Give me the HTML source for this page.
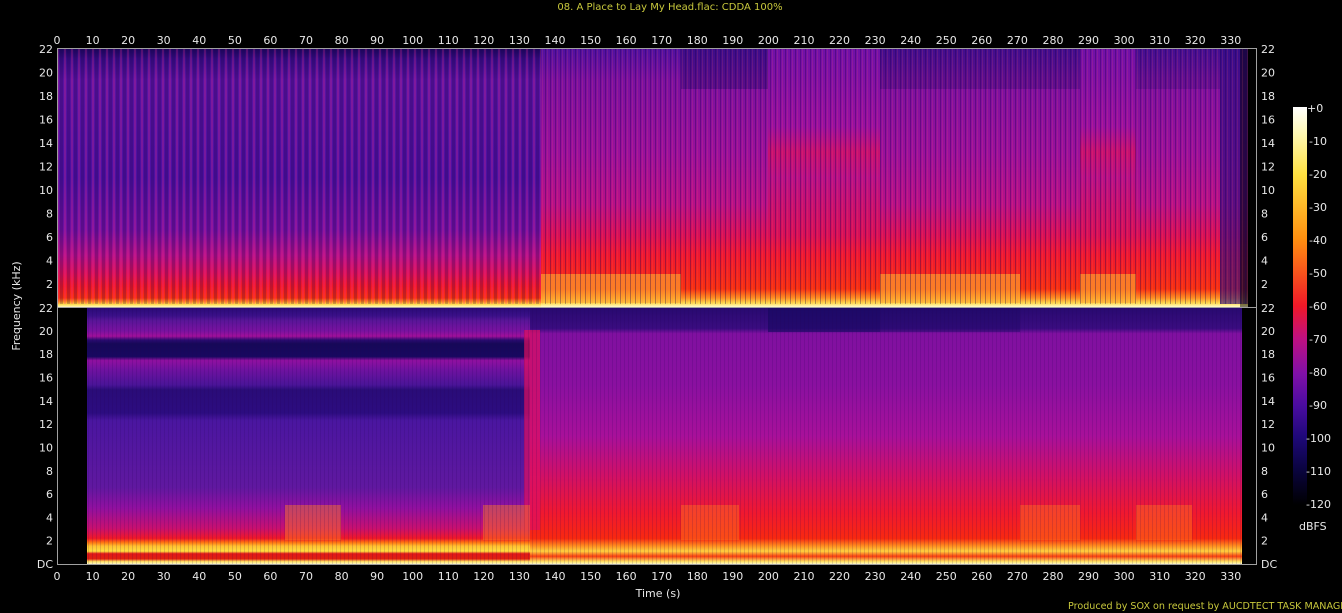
<!DOCTYPE html>
<html><head><meta charset="utf-8"><style>
html,body{margin:0;padding:0;background:#000;width:1342px;height:613px;overflow:hidden}
svg{display:block}
text{font-family:"DejaVu Sans","Liberation Sans",sans-serif;font-size:11px;fill:#e8e8e8}
</style></head><body>
<svg width="1342" height="613" viewBox="0 0 1342 613" xmlns="http://www.w3.org/2000/svg">
<defs>
<linearGradient id="tl" x1="0" y1="49" x2="0" y2="307" gradientUnits="userSpaceOnUse">
<stop offset="0" stop-color="#1e0660"/><stop offset="0.04" stop-color="#3a0c88"/>
<stop offset="0.12" stop-color="#5a12a0"/><stop offset="0.5" stop-color="#4c10a0"/>
<stop offset="0.7" stop-color="#7010a0"/><stop offset="0.8" stop-color="#b01088"/>
<stop offset="0.87" stop-color="#d81058"/><stop offset="0.92" stop-color="#f01828"/>
<stop offset="0.965" stop-color="#f83010"/><stop offset="0.98" stop-color="#ff9020"/>
<stop offset="0.99" stop-color="#ffe050"/><stop offset="1" stop-color="#fff8c0"/>
</linearGradient>
<linearGradient id="tr" x1="0" y1="49" x2="0" y2="307" gradientUnits="userSpaceOnUse">
<stop offset="0" stop-color="#5010a0"/><stop offset="0.12" stop-color="#7a10a0"/>
<stop offset="0.4" stop-color="#9a109c"/><stop offset="0.6" stop-color="#b81088"/>
<stop offset="0.72" stop-color="#d81058"/><stop offset="0.8" stop-color="#f01830"/>
<stop offset="0.93" stop-color="#f83010"/><stop offset="0.965" stop-color="#ff9020"/>
<stop offset="0.985" stop-color="#ffe050"/><stop offset="1" stop-color="#fffad0"/>
</linearGradient>
<linearGradient id="tm" x1="0" y1="49" x2="0" y2="307" gradientUnits="userSpaceOnUse">
<stop offset="0" stop-color="#7010a8"/><stop offset="0.3" stop-color="#9a10a0"/>
<stop offset="0.4" stop-color="#c81070"/><stop offset="0.5" stop-color="#b81088"/>
<stop offset="0.72" stop-color="#d81058"/><stop offset="0.8" stop-color="#f01830"/>
<stop offset="0.93" stop-color="#f83010"/><stop offset="0.965" stop-color="#ff9020"/>
<stop offset="0.985" stop-color="#ffe050"/><stop offset="1" stop-color="#fffad0"/>
</linearGradient>
<linearGradient id="bl" x1="0" y1="308" x2="0" y2="564" gradientUnits="userSpaceOnUse">
<stop offset="0" stop-color="#2a0a78"/><stop offset="0.03" stop-color="#3a1088"/>
<stop offset="0.05" stop-color="#5a1598"/><stop offset="0.09" stop-color="#7a12a0"/>
<stop offset="0.11" stop-color="#a0109a"/><stop offset="0.125" stop-color="#2a0a70"/>
<stop offset="0.14" stop-color="#160858"/><stop offset="0.19" stop-color="#180860"/>
<stop offset="0.205" stop-color="#9010a0"/><stop offset="0.24" stop-color="#7012a0"/>
<stop offset="0.3" stop-color="#4a1498"/><stop offset="0.32" stop-color="#2a0c78"/>
<stop offset="0.41" stop-color="#2c0c80"/><stop offset="0.44" stop-color="#4a16a0"/>
<stop offset="0.7" stop-color="#6018a0"/><stop offset="0.78" stop-color="#9010a0"/>
<stop offset="0.86" stop-color="#c81070"/><stop offset="0.9" stop-color="#f01828"/>
<stop offset="0.915" stop-color="#ff7010"/><stop offset="0.93" stop-color="#ffc030"/>
<stop offset="0.95" stop-color="#ffe040"/><stop offset="0.96" stop-color="#e01818"/>
<stop offset="0.98" stop-color="#e02010"/><stop offset="0.99" stop-color="#ffe060"/>
<stop offset="1" stop-color="#fff8c0"/>
</linearGradient>
<linearGradient id="br" x1="0" y1="308" x2="0" y2="564" gradientUnits="userSpaceOnUse">
<stop offset="0" stop-color="#280a70"/><stop offset="0.08" stop-color="#3a0c80"/>
<stop offset="0.1" stop-color="#8010a0"/><stop offset="0.3" stop-color="#8a10a0"/>
<stop offset="0.5" stop-color="#a8109a"/><stop offset="0.65" stop-color="#d01068"/>
<stop offset="0.8" stop-color="#f01830"/><stop offset="0.9" stop-color="#f82810"/>
<stop offset="0.93" stop-color="#ff9020"/><stop offset="0.95" stop-color="#ffd040"/>
<stop offset="0.97" stop-color="#f84010"/><stop offset="0.99" stop-color="#ffe060"/>
<stop offset="1" stop-color="#fff8c0"/>
</linearGradient>
<linearGradient id="cb" x1="0" y1="107" x2="0" y2="505" gradientUnits="userSpaceOnUse">
<stop offset="0" stop-color="#ffffff"/><stop offset="0.07" stop-color="#fff8b0"/>
<stop offset="0.17" stop-color="#ffe040"/><stop offset="0.33" stop-color="#ff9010"/>
<stop offset="0.5" stop-color="#f01828"/><stop offset="0.58" stop-color="#c01080"/>
<stop offset="0.67" stop-color="#8010a8"/><stop offset="0.75" stop-color="#4a0ca0"/>
<stop offset="0.83" stop-color="#1e0878"/><stop offset="0.91" stop-color="#0a0440"/>
<stop offset="1" stop-color="#000"/>
</linearGradient>
<pattern id="s1" x="57" y="0" width="7" height="10" patternUnits="userSpaceOnUse">
<rect x="0" y="0" width="2" height="10" fill="#ff3090" opacity="0.22"/>
<rect x="3" y="0" width="3" height="10" fill="#100040" opacity="0.22"/>
</pattern>
<pattern id="s2" x="0" y="0" width="5" height="10" patternUnits="userSpaceOnUse">
<rect x="0" y="0" width="1" height="10" fill="#200050" opacity="0.35"/>
<rect x="2" y="0" width="1" height="10" fill="#ff6060" opacity="0.15"/>
</pattern>
<pattern id="s3" x="0" y="0" width="4" height="6" patternUnits="userSpaceOnUse">
<rect x="0" y="0" width="1" height="6" fill="#200050" opacity="0.15"/>
</pattern>
</defs>

<text x="670" y="10" text-anchor="middle" style="font-size:10px;fill:#c8c83c">08. A Place to Lay My Head.flac: CDDA 100%</text>

<rect x="57" y="49" width="484" height="258" fill="url(#tl)"/>
<rect x="541" y="49" width="707" height="258" fill="url(#tr)"/>
<rect x="768" y="49" width="112" height="258" fill="url(#tm)"/>
<rect x="1080" y="49" width="56" height="258" fill="url(#tm)"/>
<rect x="681" y="49" width="87" height="40" fill="#200868" opacity="0.4"/>
<rect x="880" y="49" width="200" height="40" fill="#200868" opacity="0.3"/>
<rect x="1136" y="49" width="84" height="40" fill="#200868" opacity="0.25"/>
<rect x="541" y="274" width="140" height="29" fill="#ffb030" opacity="0.6"/>
<rect x="880" y="274" width="140" height="29" fill="#ffb030" opacity="0.6"/>
<rect x="1080" y="274" width="56" height="29" fill="#ffb030" opacity="0.6"/>
<rect x="1220" y="49" width="28" height="255" fill="#2a0a80" opacity="0.65"/>
<rect x="1240" y="49" width="8" height="258" fill="#000" opacity="0.5"/>
<rect x="57" y="49" width="484" height="255" fill="url(#s1)"/>
<rect x="541" y="49" width="707" height="255" fill="url(#s2)"/>

<rect x="57" y="308" width="30" height="256" fill="#000"/>
<rect x="87" y="308" width="443" height="256" fill="url(#bl)"/>
<rect x="530" y="308" width="712" height="256" fill="url(#br)"/>
<rect x="524" y="330" width="16" height="200" fill="#e01060" opacity="0.7"/>
<rect x="768" y="308" width="112" height="24" fill="#160860" opacity="0.6"/>
<rect x="880" y="308" width="140" height="24" fill="#160860" opacity="0.35"/>
<rect x="285" y="505" width="56" height="35" fill="#ff8020" opacity="0.45"/>
<rect x="483" y="505" width="47" height="35" fill="#ff8020" opacity="0.45"/>
<rect x="681" y="505" width="58" height="35" fill="#ff8020" opacity="0.4"/>
<rect x="1020" y="505" width="60" height="35" fill="#ff8020" opacity="0.4"/>
<rect x="1136" y="505" width="56" height="35" fill="#ff8020" opacity="0.4"/>
<rect x="87" y="308" width="1155" height="256" fill="url(#s3)"/>

<g stroke="#a0a0a0" stroke-width="1" fill="none">
<rect x="57.5" y="48.5" width="1199" height="516"/>
<line x1="57" y1="307.5" x2="1257" y2="307.5"/>
</g>

<g text-anchor="middle">
<text x="57" y="44">0</text><text x="92.6" y="44">10</text><text x="128.1" y="44">20</text><text x="163.7" y="44">30</text><text x="199.3" y="44">40</text><text x="234.9" y="44">50</text><text x="270.4" y="44">60</text><text x="306" y="44">70</text><text x="341.6" y="44">80</text><text x="377.1" y="44">90</text><text x="412.7" y="44">100</text><text x="448.3" y="44">110</text><text x="483.8" y="44">120</text><text x="519.4" y="44">130</text><text x="555" y="44">140</text><text x="590.6" y="44">150</text><text x="626.1" y="44">160</text><text x="661.7" y="44">170</text><text x="697.3" y="44">180</text><text x="732.8" y="44">190</text><text x="768.4" y="44">200</text><text x="804" y="44">210</text><text x="839.5" y="44">220</text><text x="875.1" y="44">230</text><text x="910.7" y="44">240</text><text x="946.3" y="44">250</text><text x="981.8" y="44">260</text><text x="1017.4" y="44">270</text><text x="1053" y="44">280</text><text x="1088.5" y="44">290</text><text x="1124.1" y="44">300</text><text x="1159.7" y="44">310</text><text x="1195.2" y="44">320</text><text x="1230.8" y="44">330</text>
<text x="57" y="580">0</text><text x="92.6" y="580">10</text><text x="128.1" y="580">20</text><text x="163.7" y="580">30</text><text x="199.3" y="580">40</text><text x="234.9" y="580">50</text><text x="270.4" y="580">60</text><text x="306" y="580">70</text><text x="341.6" y="580">80</text><text x="377.1" y="580">90</text><text x="412.7" y="580">100</text><text x="448.3" y="580">110</text><text x="483.8" y="580">120</text><text x="519.4" y="580">130</text><text x="555" y="580">140</text><text x="590.6" y="580">150</text><text x="626.1" y="580">160</text><text x="661.7" y="580">170</text><text x="697.3" y="580">180</text><text x="732.8" y="580">190</text><text x="768.4" y="580">200</text><text x="804" y="580">210</text><text x="839.5" y="580">220</text><text x="875.1" y="580">230</text><text x="910.7" y="580">240</text><text x="946.3" y="580">250</text><text x="981.8" y="580">260</text><text x="1017.4" y="580">270</text><text x="1053" y="580">280</text><text x="1088.5" y="580">290</text><text x="1124.1" y="580">300</text><text x="1159.7" y="580">310</text><text x="1195.2" y="580">320</text><text x="1230.8" y="580">330</text>
</g>
<text x="658" y="597" text-anchor="middle">Time (s)</text>
<text transform="translate(20,306) rotate(-90)" text-anchor="middle">Frequency (kHz)</text>

<g text-anchor="end">
<text x="53" y="53">22</text><text x="53" y="76.5">20</text><text x="53" y="100">18</text><text x="53" y="123.5">16</text><text x="53" y="147">14</text><text x="53" y="170.5">12</text><text x="53" y="194">10</text><text x="53" y="217.5">8</text><text x="53" y="241">6</text><text x="53" y="264.5">4</text><text x="53" y="288">2</text>
<text x="53" y="312">22</text><text x="53" y="335">20</text><text x="53" y="358">18</text><text x="53" y="381.6">16</text><text x="53" y="405">14</text><text x="53" y="428">12</text><text x="53" y="451.5">10</text><text x="53" y="474.8">8</text><text x="53" y="498">6</text><text x="53" y="521.4">4</text><text x="53" y="544.7">2</text><text x="53" y="568">DC</text>
</g>
<g>
<text x="1261" y="53">22</text><text x="1261" y="76.5">20</text><text x="1261" y="100">18</text><text x="1261" y="123.5">16</text><text x="1261" y="147">14</text><text x="1261" y="170.5">12</text><text x="1261" y="194">10</text><text x="1261" y="217.5">8</text><text x="1261" y="241">6</text><text x="1261" y="264.5">4</text><text x="1261" y="288">2</text>
<text x="1261" y="312">22</text><text x="1261" y="335">20</text><text x="1261" y="358">18</text><text x="1261" y="381.6">16</text><text x="1261" y="405">14</text><text x="1261" y="428">12</text><text x="1261" y="451.5">10</text><text x="1261" y="474.8">8</text><text x="1261" y="498">6</text><text x="1261" y="521.4">4</text><text x="1261" y="544.7">2</text><text x="1261" y="568">DC</text>
</g>

<rect x="1293" y="107" width="14" height="398" fill="url(#cb)"/>
<g>
<text x="1307" y="112">+0</text><text x="1309" y="145">-10</text><text x="1309" y="178">-20</text><text x="1309" y="211">-30</text><text x="1309" y="244">-40</text><text x="1309" y="277">-50</text><text x="1309" y="310">-60</text><text x="1309" y="343">-70</text><text x="1309" y="376">-80</text><text x="1309" y="409">-90</text><text x="1306" y="442">-100</text><text x="1306" y="475">-110</text><text x="1306" y="508">-120</text>
</g>
<text x="1299" y="530">dBFS</text>

<text x="1068" y="609" textLength="285" lengthAdjust="spacingAndGlyphs" style="font-size:10px;fill:#c8c83c">Produced by SOX on request by AUCDTECT TASK MANAGER</text>
</svg>
</body></html>
